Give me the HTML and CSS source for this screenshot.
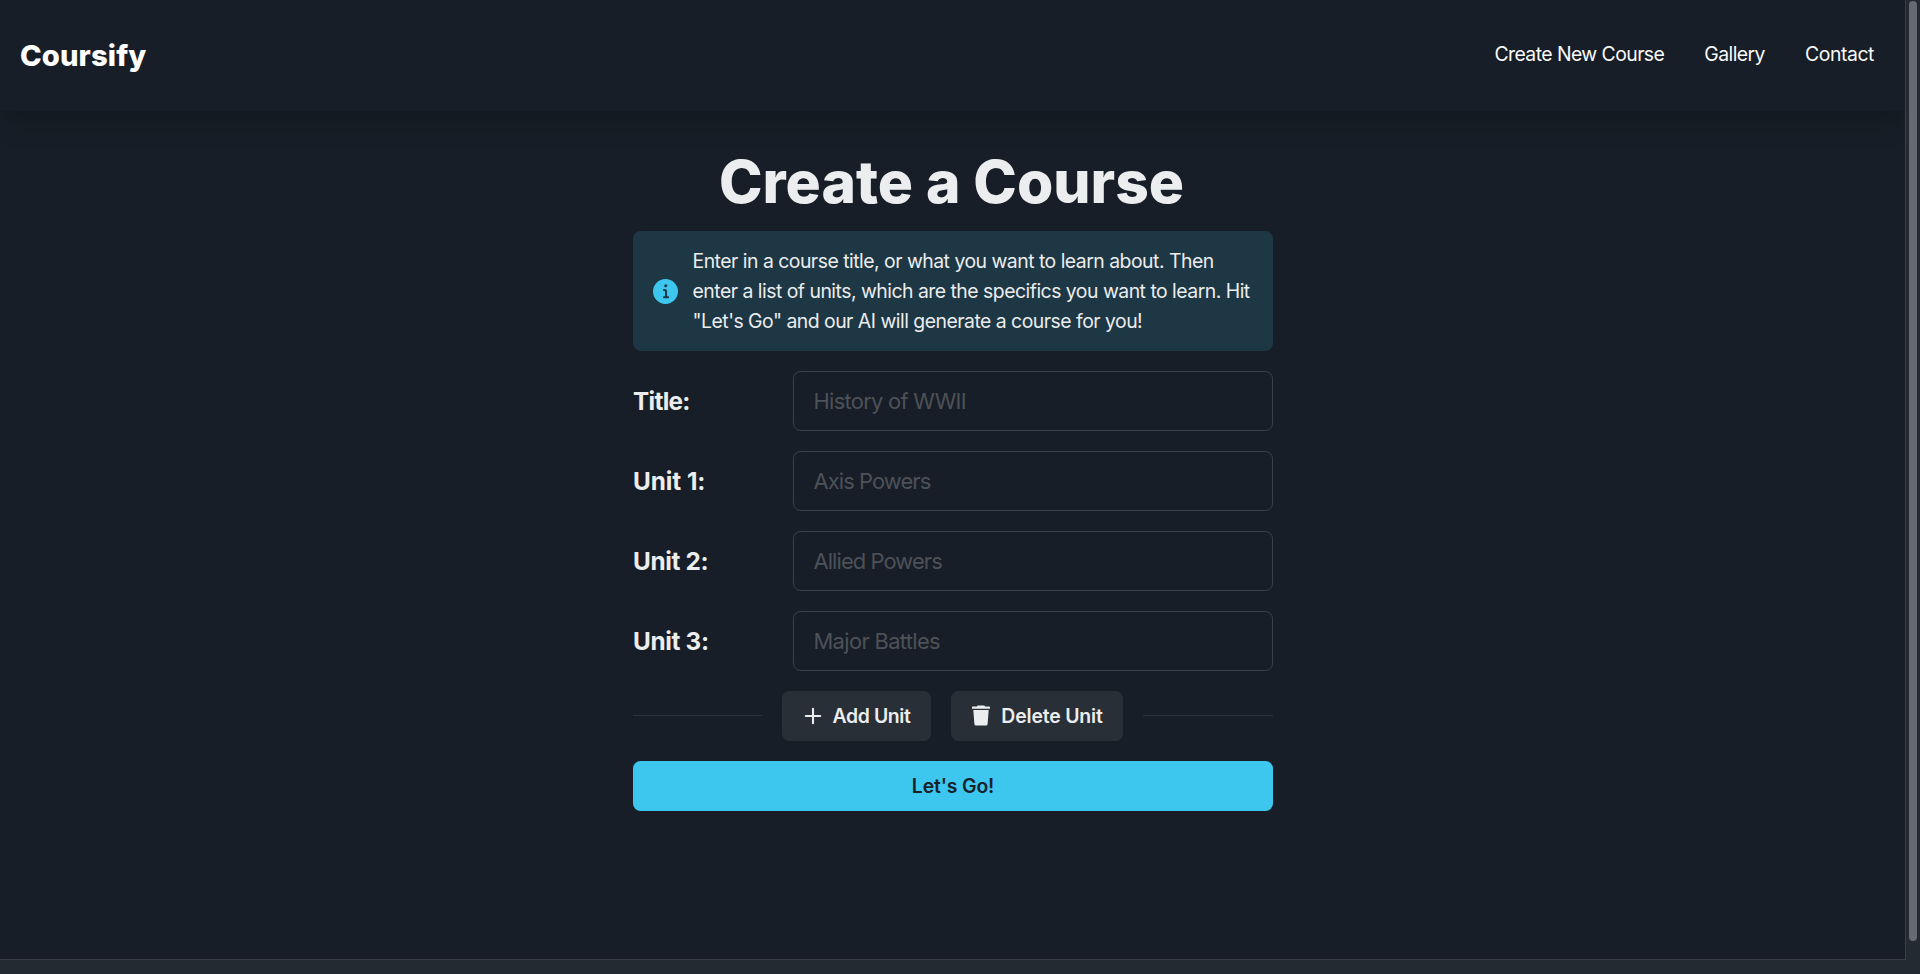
FILE: index.html
```html
<!DOCTYPE html>
<html lang="en">
<head>
<meta charset="utf-8">
<title>Coursify</title>
<link rel="stylesheet" href="styles.css">
</head>
<body>
<div class="window">
  <div class="page">
    <header class="header">
      <a class="logo">Coursify</a>
      <nav class="nav"><a class="nav-create">Create New Course</a><a class="nav-gallery">Gallery</a><a class="nav-contact">Contact</a></nav>
    </header>
    <main class="main">
      <h1 class="heading">Create a Course</h1>
      <div class="alert">
        <svg class="alert-icon" viewBox="0 0 24 24"><path fill="currentColor" d="M12 0a12 12 0 1 0 12 12A12 12 0 0 0 12 0Zm.25 5a1.5 1.5 0 1 1-1.5 1.5 1.5 1.5 0 0 1 1.5-1.5Zm2.25 13.5h-4a1 1 0 0 1 0-2h.75a.25.25 0 0 0 .25-.25v-4.5a.25.25 0 0 0-.25-.25h-.75a1 1 0 0 1 0-2h1a2 2 0 0 1 2 2v4.75a.25.25 0 0 0 .25.25h.75a1 1 0 1 1 0 2Z"/></svg>
        <p class="alert-text">Enter in a course title, or what you want to learn about. Then<br>enter a list of units, which are the specifics you want to learn. Hit<br>"Let's Go" and our AI will generate a course for you!</p>
      </div>
      <form class="form">
        <div class="field"><label class="label label-title">Title:</label><input class="input input-title" placeholder="History of WWII"></div>
        <div class="field"><label class="label label-one">Unit 1:</label><input class="input input-tight" placeholder="Axis Powers"></div>
        <div class="field"><label class="label">Unit 2:</label><input class="input input-tight" placeholder="Allied Powers"></div>
        <div class="field"><label class="label">Unit 3:</label><input class="input" placeholder="Major Battles"></div>
        <div class="actions">
          <span class="divider"></span>
          <button type="button" class="button add"><svg class="plus" viewBox="0 0 20 20"><path d="M10 2.800v14.400M2.800 10h14.400" stroke="currentColor" stroke-width="2.100" stroke-linecap="round"/></svg>Add Unit</button>
          <button type="button" class="button delete"><svg class="trash" viewBox="0 0 20 22"><path fill="currentColor" d="M1 2.2q0-.8.8-.8H6L6.6.5h6.8l.6.9h4.2q.8 0 .8.8v1.5H1ZM2.3 5h15.4l-1.1 14q-.1 1.6-1.6 1.6H5q-1.500 0-1.600-1.600Z"/></svg>Delete Unit</button>
          <span class="divider"></span>
        </div>
        <button type="button" class="button go">Let's Go!</button>
      </form>
    </main>
  </div>
  <div class="scroll-track"><div class="scroll-thumb"></div></div>
</div>
</body>
</html>
```
FILE: styles.css
```css
* { box-sizing: border-box; }
body {
  margin: 0;
  background: #232a32;
  color: #ebedee;
  font: 400 19.4px/30px Inter, "Liberation Sans", sans-serif;
}
.window { display: flex; height: 974px; overflow: hidden; }
.page {
  width: 1906px;
  height: 960px;
  border-right: 1px solid #3a3f47;
  border-bottom: 1px solid #3a3f47;
  background: #171e27;
  overflow: hidden;
}
.header {
  display: flex;
  align-items: center;
  justify-content: space-between;
  height: 111px;
  padding: 0 31px 0 20px;
  box-shadow: 0 20px 25px -5px rgba(0, 0, 0, .1), 0 10px 10px -5px rgba(0, 0, 0, .04);
}
.logo { color: #fff; font-size: 29.2px; font-weight: 800; letter-spacing: .1px; }
.nav { display: flex; padding-bottom: 3px; color: #fafafa; gap: 40px; letter-spacing: -.56px; }
.nav-contact { letter-spacing: -.42px; }
.main { width: 640px; margin: 35px 0 0 633px; }
.heading {
  margin: 0 0 13px;
  padding-right: 3px;
  color: #ebedee;
  font-size: 58.7px;
  font-weight: 800;
  line-height: 72px;
  text-align: center;
}
.alert {
  display: flex;
  align-items: center;
  gap: 14.5px;
  height: 120px;
  padding: 0 20px;
  border-radius: 8px;
  background: #1e3745;
}
.alert-icon { flex: none; width: 25px; height: 25px; color: #3dc7ef; }
.alert-text { margin: 0; white-space: nowrap; letter-spacing: -.505px; }
.form { display: grid; gap: 20px; margin-top: 20px; }
.field { display: grid; grid-template-columns: 160px 480px; align-items: center; }
.label { font-size: 24.3px; font-weight: 700; letter-spacing: -.32px; }
.label-title { letter-spacing: -.7px; }
.label-one { letter-spacing: -.05px; }
.input {
  height: 60px;
  padding: 0 19.5px;
  border: 1px solid #3a414a;
  border-radius: 7.5px;
  background: transparent;
  color: #ebedee;
  font: 400 21.9px Inter, "Liberation Sans", sans-serif;
  letter-spacing: -.65px;
}
.input-title { letter-spacing: -.71px; }
.input-tight { letter-spacing: -.9px; }
.input::placeholder { color: #4d5158; opacity: 1; }
.actions { display: flex; align-items: center; gap: 20px; }
.divider { flex: 1; height: 1px; margin-bottom: 1px; background: #2d343d; }
.divider:first-child { flex: 0 0 129px; }
.button {
  display: flex;
  align-items: center;
  justify-content: center;
  height: 50px;
  padding: 0;
  border: 0;
  border-radius: 7.5px;
  background: #292f37;
  color: #ebedee;
  font: 600 19.4px Inter, "Liberation Sans", sans-serif;
}
.add { width: 149px; gap: 10px; letter-spacing: -.4px; }
.delete { width: 172px; gap: 10px; letter-spacing: -.16px; }
.plus { width: 20px; height: 20px; }
.trash { width: 20px; height: 22px; }
.go { width: 640px; background: #3dc7ef; color: #18212a; letter-spacing: -.14px; }
.scroll-track { padding: 1px 3px; }
.scroll-thumb { width: 8px; height: 940px; border-radius: 4px; background: #666a72; }
```
